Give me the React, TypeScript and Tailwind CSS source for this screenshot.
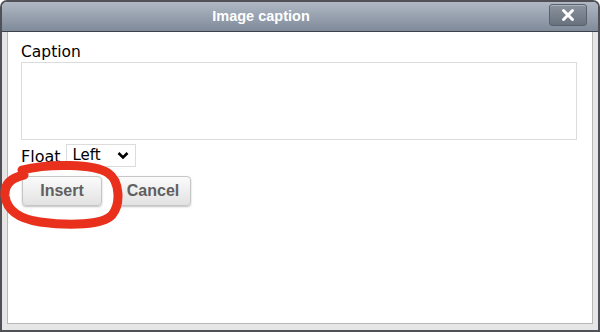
import React from "react";

export default function App() {
  return (
    <div className="relative w-[600px] h-[332px] bg-white">
      <div className="w-[600px] h-[332px] flex flex-col rounded-t-[7px] border-2 border-[#4f5156] bg-[#e6e6e6] overflow-hidden">
        <div className="relative h-[30px] shrink-0 flex items-center justify-center bg-gradient-to-b from-[#b0b8c4] to-[#7f8a9a] border-b border-[#3e4248]">
          <span className="text-white font-bold text-[14.5px] pr-[78px] [font-family:'Liberation_Sans',Arial,sans-serif]">
            Image caption
          </span>
          <div className="absolute right-[11px] top-[2px] w-[38px] h-[22px] rounded-[3px] border border-[#59616c] bg-gradient-to-b from-[#8b939e] to-[#68717e] flex items-center justify-center shadow-[inset_0_1px_0_rgba(255,255,255,0.3)]">
            <svg width="14" height="14" viewBox="0 0 14 14">
              <path d="M2.5 2.5 L11.5 11.5 M11.5 2.5 L2.5 11.5" stroke="white" strokeWidth="3" strokeLinecap="round" />
            </svg>
          </div>
        </div>
        <div className="flex-1 px-[5px] pb-[6px] flex">
          <div className="flex-1 bg-white border-x border-b border-[#b8b8b8] pl-[13px] pr-[15px] pt-[11px] flex flex-col [font-family:'DejaVu_Sans',Verdana,sans-serif] text-[15.5px] text-black">
            <div className="leading-[19px]">Caption</div>
            <div className="h-[78px] w-full border border-[#dcdcdc]"></div>
            <div className="mt-[4px] flex items-center gap-[5px]">
              <span className="leading-[19px] pt-[2px] text-[16px]">Float</span>
              <div className="w-[70px] h-[23px] border border-[#dcdcdc] flex items-center justify-between pl-[6px] pr-[6px] text-[15px]">
                <span>Left</span>
                <svg width="12" height="9" viewBox="0 0 12 9">
                  <path d="M1.5 2 L6 6.5 L10.5 2" stroke="black" strokeWidth="2.6" fill="none" />
                </svg>
              </div>
            </div>
            <div className="mt-[9px] flex gap-[13px] [font-family:'Liberation_Sans',Arial,sans-serif]">
              <div className="ml-[1px] w-[80px] h-[30px] rounded-[4px] border border-[#c6c6c6] bg-gradient-to-b from-[#fbfbfb] to-[#e2e2e2] shadow-[0_1px_2px_rgba(0,0,0,0.25)] flex items-center justify-center font-bold text-[16px] text-[#606060]">
                Insert
              </div>
              <div className="w-[76px] h-[30px] rounded-[4px] border border-[#c6c6c6] bg-gradient-to-b from-[#fbfbfb] to-[#e2e2e2] shadow-[0_1px_2px_rgba(0,0,0,0.25)] flex items-center justify-center font-bold text-[16px] text-[#606060]">
                Cancel
              </div>
            </div>
          </div>
        </div>
      </div>
      <svg className="absolute left-0 top-0 pointer-events-none" width="600" height="332" viewBox="0 0 600 332">
        <path
          d="M 22 170 C 50 163, 94 164, 108 173 C 120 181, 121 204, 112 215 C 103 225, 70 226, 40 222 C 20 219, 7 211, 5 196 C 4 185, 10 178, 24 175"
          stroke="#e8301c"
          strokeWidth="9"
          fill="none"
          strokeLinecap="round"
        />
      </svg>
    </div>
  );
}
